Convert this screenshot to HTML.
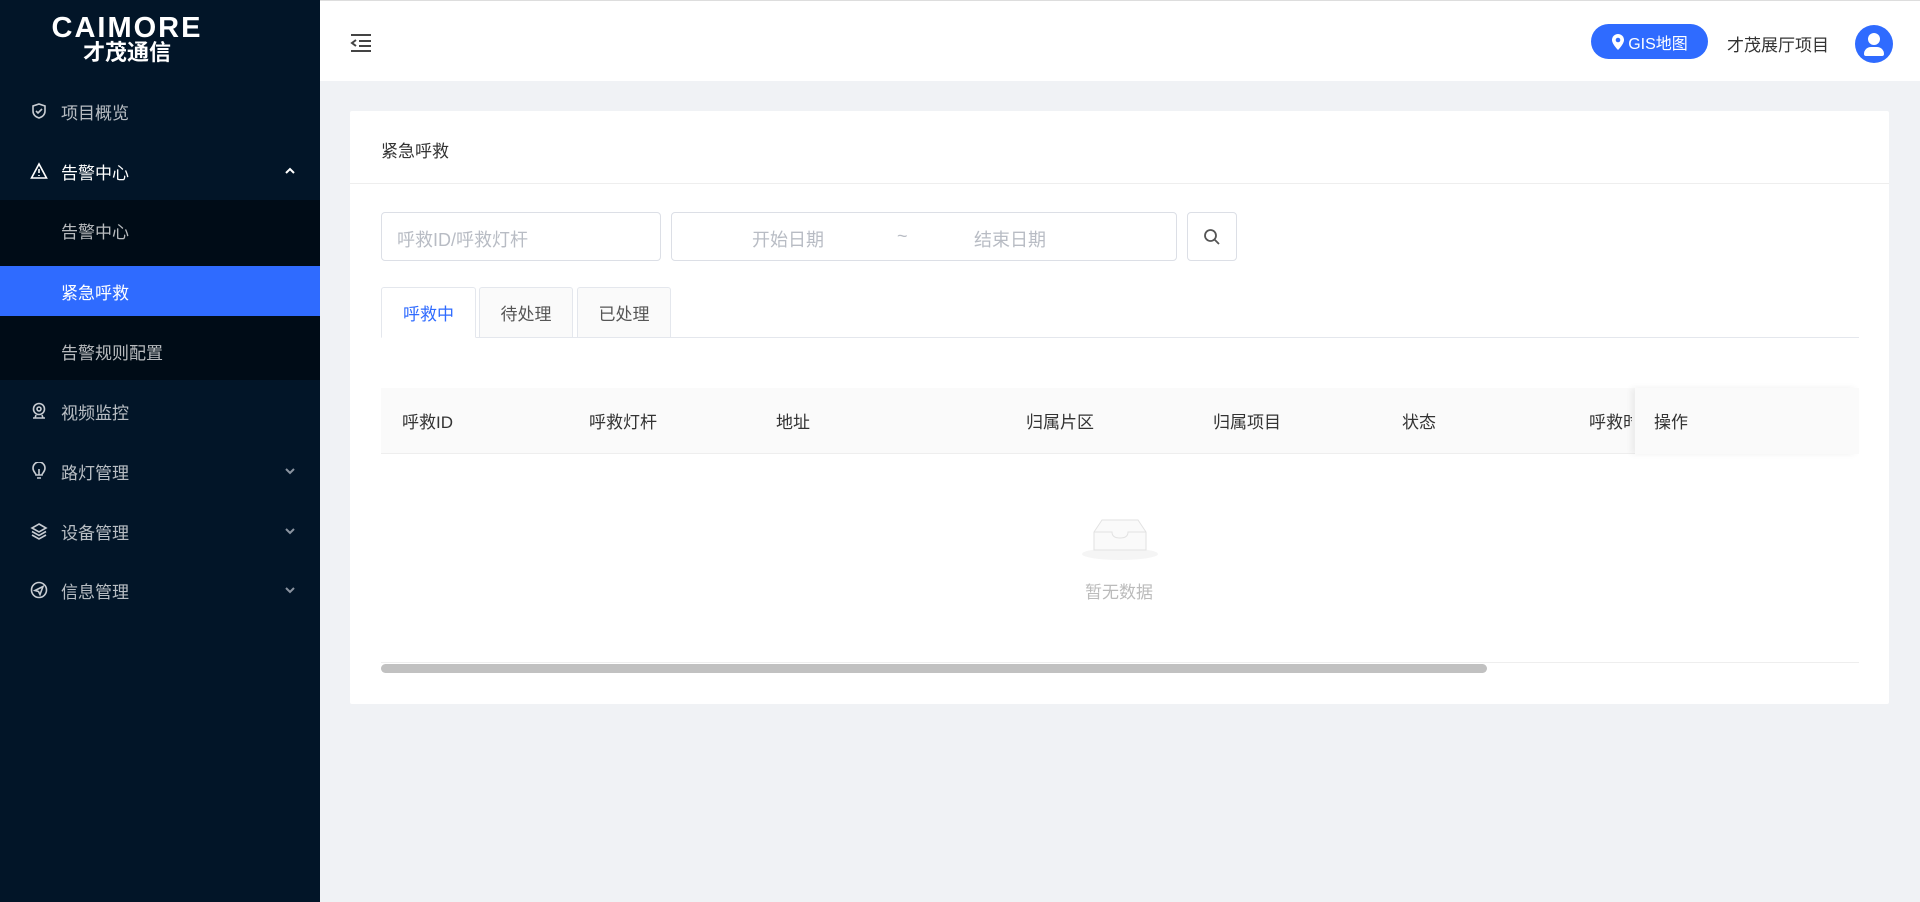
<!DOCTYPE html>
<html><head><meta charset="utf-8"><style>
*{margin:0;padding:0;box-sizing:border-box}
body{width:1920px;height:902px;overflow:hidden;background:#f0f2f5;font-family:"Liberation Sans","Noto Sans CJK SC",sans-serif;position:relative}
.side{position:absolute;left:0;top:0;width:320px;height:902px;background:#021528}
.logo{position:absolute;left:37px;top:14px;width:180px;text-align:center;color:#fff}
.logo .en{font-size:29px;letter-spacing:2px;font-weight:700;line-height:28px}
.logo .cn{font-size:22px;line-height:26px;margin-top:-2px;font-weight:700}
.mi{position:absolute;left:0;width:320px;height:50px;display:flex;align-items:center;color:rgba(255,255,255,.72);font-size:17px}
.mi .ic{position:absolute;left:30px;top:16px;width:18px;height:18px}
.mi span{position:absolute;left:61px}
.mi .ar{position:absolute;left:284px;top:19px}
.sub{position:absolute;left:0;top:200px;width:320px;height:180px;background:#000c17}
.act{background:#2f6bff;color:#fff}
.hdr{position:absolute;left:320px;top:0;width:1600px;height:81px;background:#fff;border-top:1px solid #ddd}
.card{position:absolute;left:350px;top:111px;width:1539px;height:593px;background:#fff;border-radius:2px}
.t{position:absolute;font-size:17px;color:#333}
.inp{position:absolute;top:212px;height:49px;border:1px solid #dcdfe6;border-radius:4px;background:#fff;color:#b8bcc4;font-size:18px}
.tab{position:absolute;top:287px;height:51px;border:1px solid #e4e7ed;background:#fafafa;font-size:17px;color:#555;display:flex;align-items:center;justify-content:center;border-radius:3px 3px 0 0}
.th{position:absolute;top:408px;font-size:17px;color:#333}
</style></head><body>
<div class="side">
 <div class="logo"><div class="en">CAIMORE</div><div class="cn">才茂通信</div></div>
 <div class="mi" style="top:86px"><svg class="ic" viewBox="0 0 18 18" fill="none" stroke="#c8ccd2" stroke-width="1.6"><path d="M9 2l6 2v5c0 4-3 6-6 7-3-1-6-3-6-7V4z"/><path d="M6 9l2 2 4-4"/></svg><span>项目概览</span></div>
 <div class="mi" style="top:146px;color:#fff"><svg class="ic" viewBox="0 0 18 18" fill="none" stroke="#fff" stroke-width="1.6"><path d="M9 2L1.5 16h15z"/><path d="M9 7v4M9 13v1"/></svg><span>告警中心</span><svg class="ar" width="12" height="12" viewBox="0 0 12 12" fill="none" stroke="#fff" stroke-width="2"><path d="M2 8l4-4 4 4"/></svg></div>
 <div class="sub"></div>
 <div class="mi" style="top:205px"><span>告警中心</span></div>
 <div class="mi act" style="top:266px;height:50px"><span>紧急呼救</span></div>
 <div class="mi" style="top:326px"><span>告警规则配置</span></div>
 <div class="mi" style="top:386px"><svg class="ic" viewBox="0 0 18 18" fill="none" stroke="#c8ccd2" stroke-width="1.6"><circle cx="9" cy="7" r="5.5"/><circle cx="9" cy="7" r="2"/><path d="M3 16h12M6 13l-1 3M12 13l1 3"/></svg><span>视频监控</span></div>
 <div class="mi" style="top:446px"><svg class="ic" viewBox="0 0 18 18" fill="none" stroke="#c8ccd2" stroke-width="1.6"><path d="M6 13c0-2-3-3-3-7a6 6 0 0112 0c0 4-3 5-3 7z"/><path d="M7 16h4M9 7v6"/></svg><span>路灯管理</span><svg class="ar" width="12" height="12" viewBox="0 0 12 12" fill="none" stroke="#8a93a0" stroke-width="2"><path d="M2 4l4 4 4-4"/></svg></div>
 <div class="mi" style="top:506px"><svg class="ic" viewBox="0 0 18 18" fill="none" stroke="#c8ccd2" stroke-width="1.6"><path d="M9 2l7 4-7 4-7-4z"/><path d="M2 9.5l7 4 7-4M2 13l7 4 7-4"/></svg><span>设备管理</span><svg class="ar" width="12" height="12" viewBox="0 0 12 12" fill="none" stroke="#8a93a0" stroke-width="2"><path d="M2 4l4 4 4-4"/></svg></div>
 <div class="mi" style="top:565px"><svg class="ic" viewBox="0 0 18 18" fill="none" stroke="#c8ccd2" stroke-width="1.6"><circle cx="9" cy="9" r="7.5"/><path d="M5 9.5l8-4-3 8-1.5-3z"/></svg><span>信息管理</span><svg class="ar" width="12" height="12" viewBox="0 0 12 12" fill="none" stroke="#8a93a0" stroke-width="2"><path d="M2 4l4 4 4-4"/></svg></div>
</div>
<div class="hdr">
 <svg style="position:absolute;left:29px;top:32px" width="24" height="20" viewBox="0 0 24 20" fill="none" stroke="#444" stroke-width="2"><path d="M2 2h20M10 8h12M10 13h12M2 18h20M7 7l-4 3 4 3"/></svg>
 <div style="position:absolute;left:1271px;top:23px;width:117px;height:35px;border-radius:18px;background:#2f6bff;color:#fff;font-size:16px;display:flex;align-items:center;justify-content:center"><svg width="14" height="16" viewBox="0 0 14 16" style="margin-right:3px"><path d="M7 0a6 6 0 016 6c0 4-6 10-6 10S1 10 1 6a6 6 0 016-6z" fill="#fff"/><circle cx="7" cy="6" r="2.3" fill="#2f6bff"/></svg>GIS地图</div>
 <div style="position:absolute;left:1407px;top:30px;font-size:17px;color:#333">才茂展厅项目</div>
 <div style="position:absolute;left:1535px;top:24px;width:38px;height:38px;border-radius:50%;background:#2f6bff;overflow:hidden"><div style="position:absolute;left:13px;top:8px;width:12px;height:12px;border-radius:50%;background:#fff"></div><div style="position:absolute;left:9px;top:22px;width:20px;height:9px;border-radius:7px 7px 2px 2px;background:#fff"></div></div>
</div>
<div class="card">
 <div class="t" style="left:31px;top:26px">紧急呼救</div>
 <div style="position:absolute;left:0;top:72px;width:100%;height:1px;background:#eee"></div>
</div>
<div class="inp" style="left:381px;width:280px"><span style="position:absolute;left:15px;top:13px">呼救ID/呼救灯杆</span></div>
<div class="inp" style="left:671px;width:506px"><span style="position:absolute;left:80px;top:13px">开始日期</span><span style="position:absolute;left:225px;top:13px">~</span><span style="position:absolute;left:302px;top:13px">结束日期</span></div>
<div class="inp" style="left:1187px;width:50px"><svg style="position:absolute;left:15px;top:15px" width="18" height="18" viewBox="0 0 18 18" fill="none" stroke="#555" stroke-width="1.8"><circle cx="7.5" cy="7.5" r="5.5"/><path d="M11.5 11.5l4.5 4.5"/></svg></div>
<div style="position:absolute;left:381px;top:337px;width:1478px;height:1px;background:#e4e7ed"></div>
<div class="tab" style="left:381px;width:95px;background:#fff;border-bottom-color:#fff;color:#2f6bff">呼救中</div>
<div class="tab" style="left:479px;width:94px">待处理</div>
<div class="tab" style="left:577px;width:94px">已处理</div>
<div style="position:absolute;left:381px;top:388px;width:1478px;height:66px;background:#fafafa;border-bottom:1px solid #eee"></div>
<div style="position:absolute;left:1635px;top:388px;width:224px;height:66px;background:#fafafa;box-shadow:-4px 0 6px rgba(0,0,0,.06)"></div>
<div class="th" style="left:402px">呼救ID</div>
<div class="th" style="left:589px">呼救灯杆</div>
<div class="th" style="left:776px">地址</div>
<div class="th" style="left:1026px">归属片区</div>
<div class="th" style="left:1213px">归属项目</div>
<div class="th" style="left:1402px">状态</div>
<div class="th" style="left:1589px;width:43px;overflow:hidden;white-space:nowrap">呼救时间</div>
<div class="th" style="left:1654px">操作</div>
<svg style="position:absolute;left:1080px;top:512px" width="80" height="50" viewBox="0 0 80 50"><ellipse cx="40" cy="42" rx="38" ry="6" fill="#f5f5f5"/><path d="M14 20l8-12h36l8 12v18H14z" fill="#fafafa" stroke="#e2e2e2"/><path d="M14 20h18c0 4 3 6 8 6s8-2 8-6h18" fill="none" stroke="#e2e2e2"/></svg>
<div style="position:absolute;left:1085px;top:578px;font-size:17px;color:#bbb">暂无数据</div>
<div style="position:absolute;left:381px;top:662px;width:1478px;height:1px;background:#eee"></div>
<div style="position:absolute;left:381px;top:664px;width:1106px;height:9px;border-radius:5px;background:#c1c1c1"></div>
</body></html>
